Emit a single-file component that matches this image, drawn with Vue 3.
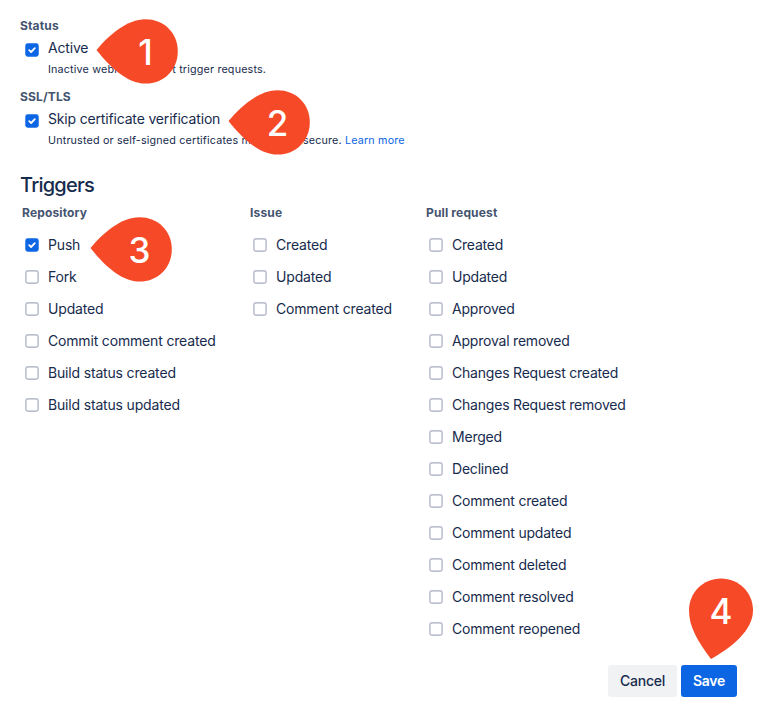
<script setup>
import { h } from 'vue'

const Checkbox = (props) =>
  h('svg', { width: 24, height: 24, viewBox: '0 0 24 24', fill: 'none' }, [
    h('rect', {
      x: 5.9, y: 5.9, width: 12.2, height: 12.2, rx: 1.8,
      fill: props.checked ? '#0c66e4' : '#fff',
      stroke: props.checked ? '#0c66e4' : '#a5acbe',
      'stroke-width': 1.2,
    }),
    props.checked
      ? h('path', {
          d: 'M9.2 12.2 11.1 14 14.8 10.2',
          stroke: '#fff', 'stroke-width': 1.8, 'stroke-linecap': 'round', 'stroke-linejoin': 'round',
        })
      : null,
  ])
Checkbox.props = { checked: Boolean }

const groups = [
  { title: 'Repository', cls: 'repository', items: ['Push', 'Fork', 'Updated', 'Commit comment created', 'Build status created', 'Build status updated'] },
  { title: 'Issue', cls: 'issue', items: ['Created', 'Updated', 'Comment created'] },
  {
    title: 'Pull request',
    cls: 'pull',
    items: ['Created', 'Updated', 'Approved', 'Approval removed', 'Changes Request created', 'Changes Request removed', 'Merged', 'Declined', 'Comment created', 'Comment updated', 'Comment deleted', 'Comment resolved', 'Comment reopened'],
  },
]
</script>

<template>
  <main class="page">
    <section class="field">
      <h3 class="label">Status</h3>
      <div class="option">
        <Checkbox checked />
        <span class="text">Active</span>
      </div>
      <p class="hint">Inactive webhooks don't trigger requests.</p>
    </section>
    <section class="field">
      <h3 class="label">SSL/TLS</h3>
      <div class="option">
        <Checkbox checked />
        <span class="text">Skip certificate verification</span>
      </div>
      <p class="hint"><span>Untrusted or self-signed certificates may not be secure.</span> <a class="link">Learn more</a></p>
    </section>

    <h2 class="heading">Triggers</h2>
    <div class="groups">
      <section v-for="g in groups" :key="g.title" :class="g.cls">
        <h3 class="label">{{ g.title }}</h3>
        <ul class="list">
          <li v-for="item in g.items" :key="item" class="row">
            <Checkbox :checked="item === 'Push'" />
            <span class="text">{{ item }}</span>
          </li>
        </ul>
      </section>
    </div>

    <footer class="actions">
      <button class="btn">Cancel</button>
      <button class="btn primary">Save</button>
    </footer>

    <div v-for="n in 3" :key="n" class="pin" :class="'pin' + n">
      <svg width="82" height="65" viewBox="0 0 82 65">
        <path fill="#f54927" d="M0.5 31C13 16 31 0.3 49.5 0.3C68 0.3 81.8 14 81.8 32.4C81.8 50.4 68 64.6 49.5 64.6C31 64.6 13.5 47.5 0.5 31Z" />
      </svg>
      <span class="num">{{ n }}</span>
    </div>
    <div class="pin pin4">
      <svg width="65" height="81" viewBox="0 0 65 81">
        <path fill="#f54927" d="M22 80.9C9 64 0 49 0 32.5C0 14.5 14 0.5 32 0.5C50 0.5 64 14.5 64 32.5C64 52 43 69.5 22 80.9Z" />
      </svg>
      <span class="num">4</span>
    </div>
  </main>
</template>

<style>
body { margin: 0; background: #fff; }
</style>

<style scoped>
.page {
  position: relative;
  box-sizing: border-box;
  width: 771px;
  height: 726px;
  padding: 18px 34px 0 20px;
  overflow: hidden;
  color: #172b4d;
  font-family: Inter, "Liberation Sans", sans-serif;
  font-size: 14px;
}
.field { height: 71px; }
.label {
  margin: 0;
  color: #44546f;
  font-size: 12px;
  line-height: 16px;
  font-weight: 700;
  letter-spacing: 0.15px;
}
.option { display: flex; height: 22px; margin-top: 4px; }
.option .text { margin-left: 4px; line-height: 20px; }
.option svg { flex: none; }
.hint { margin: 0 0 0 28px; font-size: 10.75px; line-height: 20px; letter-spacing: 0.17px; white-space: nowrap; }
.link { color: #0c66e4; }
.heading { margin: 13px 0 0; font-size: 20px; line-height: 24px; font-weight: 500; letter-spacing: -0.75px; }
.groups { display: grid; grid-template-columns: 228px 176px 1fr; margin-top: 8px; height: 460px; }
.groups .label { padding-left: 2px; }
.list { margin: 8px 0 0; padding: 0; list-style: none; }
.row { display: flex; align-items: center; gap: 4px; height: 32px; }
.row .text { line-height: 18px; padding-bottom: 1px; }
.text { white-space: nowrap; letter-spacing: -0.17px; }
.pull .text { letter-spacing: -0.21px; }
.actions { display: flex; justify-content: flex-end; gap: 4px; }
.btn {
  height: 32px;
  width: 69px;
  padding: 0;
  border: 0;
  border-radius: 3px;
  background: #f1f2f4;
  color: #172b4d;
  font: 500 14px/32px Inter, sans-serif;
  letter-spacing: -0.25px;
}
.btn.primary { width: 56px; background: #0c66e4; color: #fff; font-weight: 600; }
.pin { position: absolute; }
.pin svg { display: block; }
.pin1 { left: 96px; top: 19px; }
.pin2 { left: 228px; top: 90px; }
.pin3 { left: 90px; top: 217px; }
.pin4 { left: 689px; top: 578px; }
.num {
  position: absolute;
  left: 8.5px;
  right: -8.5px;
  top: 13px;
  color: #fff;
  text-align: center;
  font-size: 35px;
  font-weight: 500;
  line-height: 40px;
}
.pin4 .num { left: -0.5px; right: 0.5px; }
</style>
